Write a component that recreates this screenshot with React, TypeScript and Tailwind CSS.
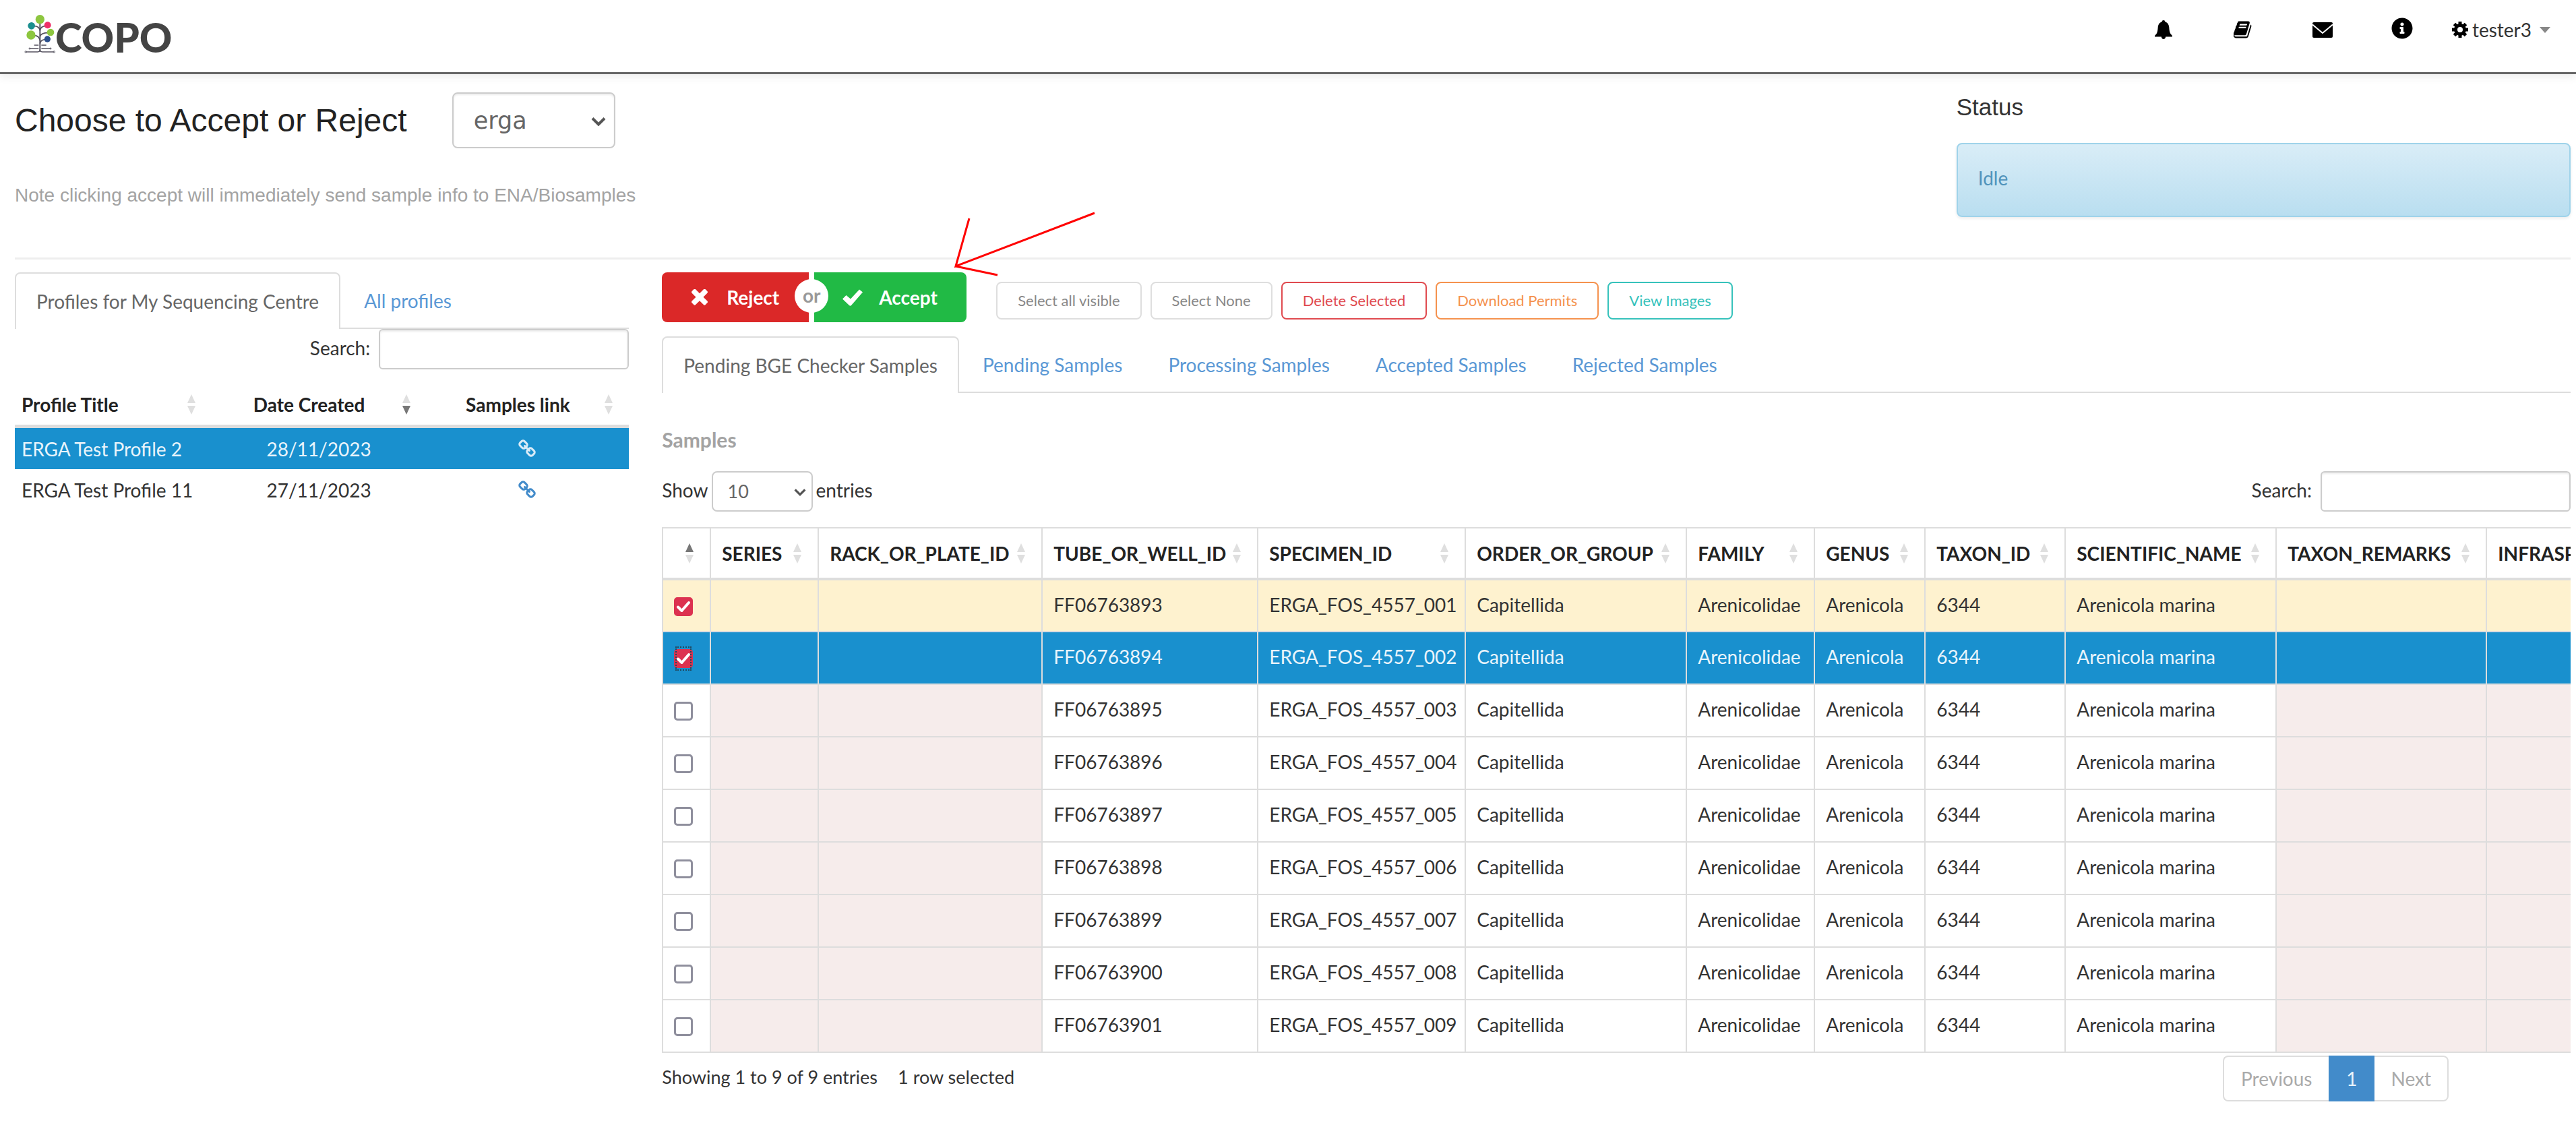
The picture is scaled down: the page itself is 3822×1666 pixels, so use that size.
import React from 'react';
import { FaInfoCircle } from 'react-icons/fa';

type Sort = 'none' | 'asc' | 'desc';

const LINK_PATH =
  'M1456 1216q0-40-28-68l-208-208q-28-28-68-28-42 0-72 32 3 3 19 18.5t21.5 21.5 15 19 13 25.5 3.5 27.5q0 40-28 68t-68 28q-15 0-27.5-3.5t-25.5-13-19-15-21.5-21.5-18.5-19q-33 31-33 73 0 40 28 68l206 207q27 27 68 27 40 0 68-26l147-146q28-28 28-67zm-703-705q0-40-28-68l-206-207q-28-28-68-28-39 0-68 27l-147 146q-28 28-28 67 0 40 28 68l208 208q27 27 68 27 42 0 72-31-3-3-19-18.5t-21.5-21.5-15-19-13-25.5-3.5-27.5q0-40 28-68t68-28q15 0 27.5 3.5t25.5 13 19 15 21.5 21.5 18.5 19q33-31 33-73zm895 705q0 120-85 203l-147 146q-83 83-203 83-121 0-204-85l-206-207q-83-83-83-203 0-123 88-209l-88-88q-86 88-208 88-120 0-204-84l-208-208q-84-84-84-204t85-203l147-146q83-83 203-83 121 0 204 85l206 207q83 83 83 203 0 123-88 209l88 88q86-88 208-88 120 0 204 84l208 208q84 84 84 204z';

const BOOK_PATH =
  'M1639 478q40 57 18 129l-275 906q-19 64-76.5 107.5t-122.5 43.5h-923q-77 0-148.5-53.5t-99.5-131.5q-24-67-2-127 0-4 3-27t4-37q1-8-3-21.5t-3-19.5q2-11 8-21t16.5-23.5 16.5-23.5q23-38 45-91.5t30-91.5q3-10 .5-30t-.5-28q3-11 17-28t17-23q21-36 42-92t25-90q1-9-2.5-32t.5-28q4-13 22-30.5t22-22.5q19-26 42.5-84.5t27.5-96.5q1-8-3-25.5t-2-26.5q2-8 9-18t18-23 17-21q8-12 16.5-30.5t15-35 16-36 19.5-32 26.5-23.5 36-11.5 47.5 5.5l-1 3q38-9 51-9h761q74 0 114 56t18 130l-274 906q-36 119-71.5 153.5t-128.5 34.5h-869q-27 0-38 15-11 16-1 43 24 70 144 70h923q29 0 56-15.5t35-41.5l300-987q7-22 5-57 38 15 59 43zm-1064 2q-4 13 2 22.5t20 9.5h608q13 0 25.5-9.5t16.5-22.5l21-64q4-13-2-22.5t-20-9.5h-608q-13 0-25.5 9.5t-16.5 22.5zm-83 256q-4 13 2 22.5t20 9.5h608q13 0 25.5-9.5t16.5-22.5l21-64q4-13-2-22.5t-20-9.5h-608q-13 0-25.5 9.5t-16.5 22.5z';

const TIMES_PATH =
  'M1490 1322q0 40-28 68l-136 136q-28 28-68 28t-68-28l-294-294-294 294q-28 28-68 28t-68-28l-136-136q-28-28-28-68t28-68l294-294-294-294q-28-28-28-68t28-68l136-136q28-28 68-28t68 28l294 294 294-294q28-28 68-28t68 28l136 136q28 28 28 68t-28 68l-294 294 294 294q28 28 28 68z';

function LogoTree() {
  return (
    <svg viewBox="48 30 138 180" className="h-[60px] w-[46px]" aria-hidden="true">
      <g fill="none" stroke="#55525f" strokeWidth="6">
        <path d="M118 74V200" />
        <path d="M92 86q22 0 26 20M144 86q-22 0-26 20M92 128q22 0 26 22M155 116q-32 0-37 16M140 146q-20 2-22 18" strokeWidth="5" />
        <path d="M92 171H112M124 171H146M74 186H112M124 186H164M60 201H108Q118 201 118 190Q118 201 128 201H178" strokeWidth="4" />
        <circle cx="55" cy="201" r="4" strokeWidth="3" />
        <circle cx="181" cy="201" r="4" strokeWidth="3" />
        <circle cx="72" cy="186" r="3" strokeWidth="3" />
        <circle cx="165" cy="186" r="3" strokeWidth="3" />
      </g>
      <circle cx="118" cy="56" r="20" fill="#8dc63f" />
      <circle cx="80" cy="85" r="16" fill="#1b8f8f" />
      <circle cx="152" cy="82" r="15" fill="#ef2f68" />
      <circle cx="165" cy="114" r="16" fill="#8dc63f" />
      <circle cx="78" cy="126" r="20" fill="#8dc63f" />
      <circle cx="151" cy="144" r="14" fill="#2c4f8c" />
    </svg>
  );
}

function BellIcon() {
  return (
    <svg viewBox="0 0 26 28" className="h-7 w-[26px]" aria-hidden="true">
      <path
        fill="#000"
        d="M13 0c1.4 0 2.2.9 2.3 2.2C19 3.2 21 6.400 21.300 10.500c.3 4 .7 7.500 2.200 9.800L26 23v1.600H16.200C16 26.700 14.800 28 13 28s-3-1.300-3.200-3.400H0V23l2.500-2.700c1.500-2.300 1.900-5.800 2.200-9.800C5 6.400 7 3.200 10.700 2.200 10.800.9 11.600 0 13 0z"
      />
    </svg>
  );
}

function MailIcon() {
  return (
    <svg viewBox="0 0 30 23" className="h-[23px] w-[30px]" aria-hidden="true">
      <rect width="30" height="23" rx="2" fill="#000" />
      <path d="M0 3.500L15 16L30 3.500" fill="none" stroke="#fff" strokeWidth="2" />
    </svg>
  );
}

function CogIcon() {
  return (
    <svg viewBox="0 0 24 24" className="size-6" aria-hidden="true">
      <circle cx="12" cy="12" r="6.500" fill="none" stroke="#000" strokeWidth="5" />
      <g stroke="#000" strokeWidth="5">
        <path d="M12 0v4M12 20v4M0 12h4M20 12h4M3.500 3.500l3 3M17.500 17.500l3 3M20.500 3.500l-3 3M6.500 17.500l-3 3" />
      </g>
    </svg>
  );
}

function LinkIcon() {
  return (
    <svg viewBox="0 0 1792 1792" className="size-7 fill-current" aria-hidden="true">
      <path d={LINK_PATH} />
    </svg>
  );
}

function SortIcon({ sort }: { sort: Sort }) {
  return (
    <svg viewBox="0 0 12 30" className="h-[30px] w-3 shrink-0" aria-hidden="true">
      <path d="M6 0L12 13H0z" fill={sort === 'asc' ? '#777777' : '#dfdfdf'} />
      <path d="M6 30L12 17H0z" fill={sort === 'desc' ? '#777777' : '#dfdfdf'} />
    </svg>
  );
}

function Chevron({ className }: { className: string }) {
  return (
    <svg viewBox="0 0 22 14" className={className} aria-hidden="true">
      <path d="M2 2.500L11 11.500L20 2.500" fill="none" stroke="#555" strokeWidth="4" />
    </svg>
  );
}

function Tabs({ tabs, label }: { tabs: string[]; label: string }) {
  return (
    <nav aria-label={label} className="flex border-b-2 border-[#dddddd]">
      {tabs.map((tab, i) => (
        <a
          key={tab}
          href="#"
          className={
            i === 0
              ? '-mb-0.5 h-[84px] rounded-t-lg border-2 border-b-0 border-[#dddddd] bg-white px-[30px] leading-[82px] whitespace-nowrap text-[#666666]'
              : 'ml-0.5 px-[33px] leading-[84px] h-[82px] whitespace-nowrap text-[#5a98d5]'
          }
        >
          {tab}
        </a>
      ))}
    </nav>
  );
}

function SearchBox({ id }: { id: string }) {
  return (
    <div className="flex items-center justify-end gap-[13px]">
      <label htmlFor={id} className="pb-1">Search:</label>
      <input
        id={id}
        type="search"
        className="h-[60px] w-[371px] rounded-md border-2 border-[#cccccc] bg-white px-4 shadow-[inset_0_2px_3px_rgba(0,0,0,0.08)]"
      />
    </div>
  );
}

const profiles = [
  { title: 'ERGA Test Profile 2', date: '28/11/2023', active: true },
  { title: 'ERGA Test Profile 11', date: '27/11/2023', active: false },
];

function ProfilesTable() {
  const headers: { name: string; sort: Sort; width: string; align: string }[] = [
    { name: 'Profile Title', sort: 'none', width: 'w-[32%]', align: 'text-left' },
    { name: 'Date Created', sort: 'desc', width: 'w-[35%]', align: 'text-center' },
    { name: 'Samples link', sort: 'none', width: 'w-[33%]', align: 'text-center' },
  ];
  return (
    <table className="mt-[21px] w-full table-fixed border-separate border-spacing-0">
      <thead>
        <tr>
          {headers.map((h) => (
            <th
              key={h.name}
              className={`${h.width} h-[66px] border-b-[5px] border-[#dddddd] p-0 text-[#222222]`}
            >
              <div className="flex items-center gap-[3px] pr-6 pl-[10px]">
                <span className={`${h.align} flex-1 whitespace-nowrap`}>{h.name}</span>
                <SortIcon sort={h.sort} />
              </div>
            </th>
          ))}
        </tr>
      </thead>
      <tbody>
        {profiles.map((p) => (
          <tr key={p.title} className={p.active ? 'bg-[#1990ce] text-[#e9f4fb]' : 'text-[#333333]'}>
            <td className="h-[61px] pl-[10px] whitespace-nowrap">{p.title}</td>
            <td className="text-center">{p.date}</td>
            <td className="p-0">
              <a
                href="#"
                aria-label={`Samples of ${p.title}`}
                className={p.active ? 'flex justify-center text-[#d9ebf7]' : 'flex justify-center text-[#428bca]'}
              >
                <LinkIcon />
              </a>
            </td>
          </tr>
        ))}
      </tbody>
    </table>
  );
}

const columns: { name: string; width: string; sort: Sort }[] = [
  { name: '', width: 'w-[71px]', sort: 'asc' },
  { name: 'SERIES', width: 'w-[160px]', sort: 'none' },
  { name: 'RACK_OR_PLATE_ID', width: 'w-[332px]', sort: 'none' },
  { name: 'TUBE_OR_WELL_ID', width: 'w-[320px]', sort: 'none' },
  { name: 'SPECIMEN_ID', width: 'w-[308px]', sort: 'none' },
  { name: 'ORDER_OR_GROUP', width: 'w-[328px]', sort: 'none' },
  { name: 'FAMILY', width: 'w-[190px]', sort: 'none' },
  { name: 'GENUS', width: 'w-[164px]', sort: 'none' },
  { name: 'TAXON_ID', width: 'w-[208px]', sort: 'none' },
  { name: 'SCIENTIFIC_NAME', width: 'w-[313px]', sort: 'none' },
  { name: 'TAXON_REMARKS', width: 'w-[312px]', sort: 'none' },
  { name: 'INFRASPECIFIC_EPITHET', width: 'w-[420px]', sort: 'none' },
];

const samples = Array.from({ length: 9 }, (_, i) => [
  '',
  '',
  `FF0676${3893 + i}`,
  `ERGA_FOS_4557_00${i + 1}`,
  'Capitellida',
  'Arenicolidae',
  'Arenicola',
  '6344',
  'Arenicola marina',
  '',
  '',
]);

function RowCheckbox({ label, checked, focused }: { label: string; checked: boolean; focused: boolean }) {
  return (
    <div className="relative mt-0.5 ml-4 size-7">
      <input
        type="checkbox"
        aria-label={label}
        defaultChecked={checked}
        className="peer block size-7 appearance-none rounded-[5px] border-[3px] border-[#8f8f9d] bg-white checked:border-[#dc3250] checked:bg-[#dc3250]"
      />
      <svg viewBox="0 0 28 28" className="pointer-events-none absolute inset-0 hidden size-7 peer-checked:block" aria-hidden="true">
        <path d="M6 14.500L11.500 20L22 8" fill="none" stroke="#fff" strokeWidth="4" strokeLinecap="round" strokeLinejoin="round" />
      </svg>
      {focused && <span className="pointer-events-none absolute inset-x-0.5 -inset-y-1 border-2 border-dotted border-[#20485f]" />}
    </div>
  );
}

function SamplesTable() {
  return (
    <div className="mt-[23px] overflow-hidden">
      <table className="w-[3126px] table-fixed border-collapse border-2 border-[#dddddd]">
        <thead>
          <tr>
            {columns.map((c) => (
              <th
                key={c.name}
                className={`${c.width} h-[76px] border-2 border-b-4 border-[#dddddd] p-0 text-left text-[#222222]`}
              >
                <div className="flex items-center justify-between pr-6 pl-4">
                  <span className="whitespace-nowrap">{c.name}</span>
                  <SortIcon sort={c.sort} />
                </div>
              </th>
            ))}
          </tr>
        </thead>
        <tbody>
          {samples.map((row, r) => (
            <tr
              key={row[2]}
              className={
                r === 0
                  ? 'bg-[#fef2cf] text-[#333333]'
                  : r === 1
                    ? 'bg-[#1990ce] text-[#e9f4fb]'
                    : 'text-[#333333]'
              }
            >
              <td className="h-[78px] border-2 border-[#dddddd] p-0">
                <RowCheckbox label={`Select ${row[2]}`} checked={r < 2} focused={r === 1} />
              </td>
              {row.map((value, c) => (
                <td
                  key={c}
                  className={
                    r > 1 && value === ''
                      ? 'border-2 border-[#dddddd] bg-[#f6eceb] p-0'
                      : 'border-2 border-[#dddddd] p-0 pb-1 pl-4 whitespace-nowrap'
                  }
                >
                  {value}
                </td>
              ))}
            </tr>
          ))}
        </tbody>
      </table>
    </div>
  );
}

function PointerArrow() {
  return (
    <svg
      viewBox="0 0 214 104"
      className="pointer-events-none absolute -top-[94px] left-[434px] h-[104px] w-[214px]"
      aria-hidden="true"
    >
      <path d="M22 14L2 85L208 6M2 85L64 98" fill="none" stroke="#ff0000" strokeWidth="3" />
    </svg>
  );
}

const actions = [
  { name: 'Select all visible', style: 'border-[#dedede] text-[#888888]' },
  { name: 'Select None', style: 'border-[#dedede] text-[#888888]' },
  { name: 'Delete Selected', style: 'border-[#e04a4f] text-[#e04a4f]' },
  { name: 'Download Permits', style: 'border-[#f5924e] text-[#f5924e]' },
  { name: 'View Images', style: 'border-[#36c2bb] text-[#36c2bb]' },
];

function ActionBar() {
  return (
    <div className="relative flex h-[74px]">
      <div className="relative flex gap-2 font-bold text-white">
        <button type="button" className="flex w-[218px] items-center gap-7 rounded-l-lg bg-[#db2828] pl-11">
          <svg viewBox="302 382 1188 1188" className="size-6 fill-white" aria-hidden="true">
            <path d={TIMES_PATH} />
          </svg>
          Reject
        </button>
        <button type="button" className="flex w-[226px] items-center gap-6 rounded-r-lg bg-[#21ba45] pl-[42px]">
          <svg viewBox="0 0 30 25" className="h-[25px] w-[30px] fill-white" aria-hidden="true">
            <path d="M0 14.500L5.500 9L12 14.500L25 0.500L30 4.500L13 24Q11.500 25.500 10 24z" />
          </svg>
          Accept
        </button>
        <span className="absolute top-[10px] left-[197px] size-[50px] rounded-full bg-white text-center leading-[48px] text-[#999999]">
          or
        </span>
      </div>
      <div className="mb-1 ml-11 flex gap-[13px] self-end">
        {actions.map((a) => (
          <button
            key={a.name}
            type="button"
            className={`${a.style} h-14 rounded-lg border-2 bg-white px-[30px] text-[22px] whitespace-nowrap`}
          >
            {a.name}
          </button>
        ))}
      </div>
      <PointerArrow />
    </div>
  );
}

function Header() {
  return (
    <header className="flex h-[110px] items-start justify-between border-b-[3px] border-[#666666] pr-[38px] pl-9 shadow-[0_4px_12px_rgba(0,0,0,0.08)]">
      <a href="#" className="flex items-end pt-5">
        <LogoTree />
        <span className="text-[60px] leading-[50px] font-black text-[#444444]">COPO</span>
      </a>
      <nav aria-label="Account" className="flex items-center pt-6">
        <div className="flex h-10 items-center gap-[88px]">
          <a href="#" aria-label="Notifications" className="flex w-[30px] justify-center">
            <BellIcon />
          </a>
          <a href="#" aria-label="Documentation" className="flex w-[30px] justify-center">
            <svg viewBox="100 100 1600 1600" className="h-[26px] w-7" aria-hidden="true">
              <path d={BOOK_PATH} />
            </svg>
          </a>
          <a href="#" aria-label="Messages" className="flex w-[30px] justify-center">
            <MailIcon />
          </a>
          <a href="#" aria-label="Information" className="flex w-[30px] justify-center pb-1 text-black">
            <FaInfoCircle className="size-8 shrink-0" />
          </a>
        </div>
        <button type="button" className="ml-[59px] flex items-center gap-1.5 text-[#333333]">
          <CogIcon />
          tester3
          <svg viewBox="0 0 16 9" className="ml-1.5 h-[9px] w-4" aria-hidden="true">
            <path d="M0 0H16L8 9z" fill="#888" />
          </svg>
        </button>
      </nav>
    </header>
  );
}

export default function App() {
  return (
    <div className="min-h-screen overflow-hidden bg-white font-['Lato',sans-serif] text-[28px] leading-10 text-[#333333]">
      <Header />
      <main className="pr-2 pl-[22px]">
        <section className="grid h-[275px] grid-cols-4 gap-x-[49px] border-b-[3px] border-[#eeeeee] font-['Liberation_Sans',sans-serif]">
          <div className="col-span-3 pt-[27px]">
            <div className="flex items-center gap-[67px]">
              <h1 className="text-5xl text-[#222222]">
                <label htmlFor="group">Choose to Accept or Reject</label>
              </h1>
              <div className="relative">
                <select
                  id="group"
                  className="block h-[83px] w-[242px] appearance-none rounded-lg border-2 border-[#cccccc] bg-white pl-[30px] font-['DejaVu_Sans',sans-serif] text-[35px] text-[#666666] shadow-[inset_0_2px_3px_rgba(0,0,0,0.08)]"
                >
                  <option>erga</option>
                </select>
                <Chevron className="pointer-events-none absolute top-9 right-[14px] h-[14px] w-[22px]" />
              </div>
            </div>
            <p className="mt-[50px] text-[#a3a3a3]">Note clicking accept will immediately send sample info to ENA/Biosamples</p>
          </div>
          <div className="pt-6">
            <h2 className="text-[35px] leading-[50px]">Status</h2>
            <div className="mt-7 h-[110px] rounded-lg border-2 border-[#9fd3ea] bg-linear-to-b from-[#d9edf7] to-[#b9def0] pt-[30px] pl-[30px] font-['Lato',sans-serif] text-[#5093bb] shadow-[0_2px_4px_rgba(0,0,0,0.08)]">
              Idle
            </div>
          </div>
        </section>
        <section className="mt-[19px] grid grid-cols-4 gap-x-[49px]">
          <div>
            <Tabs label="Profiles" tabs={['Profiles for My Sequencing Centre', 'All profiles']} />
            <SearchBox id="profile-search" />
            <ProfilesTable />
          </div>
          <div className="col-span-3">
            <ActionBar />
            <div className="mt-[21px]">
              <Tabs
                label="Samples"
                tabs={[
                  'Pending BGE Checker Samples',
                  'Pending Samples',
                  'Processing Samples',
                  'Accepted Samples',
                  'Rejected Samples',
                ]}
              />
            </div>
            <h3 className="mt-[49px] text-[30px] font-bold text-[#a3a3a3]">Samples</h3>
            <div className="mt-[27px] flex items-center justify-between">
              <div className="flex items-center gap-[5px]">
                <label htmlFor="page-size" className="pb-1">Show</label>
                <div className="relative">
                  <select
                    id="page-size"
                    className="block h-[60px] w-[150px] appearance-none rounded-lg border-2 border-[#cccccc] bg-white pl-[22px] text-[27px] text-[#666666]"
                  >
                    <option>10</option>
                  </select>
                  <Chevron className="pointer-events-none absolute top-[25px] right-[10px] h-3 w-[18px]" />
                </div>
                <span className="pb-1">entries</span>
              </div>
              <SearchBox id="sample-search" />
            </div>
            <SamplesTable />
            <div className="mt-1 flex items-center justify-between pr-[181px]">
              <p className="flex gap-[30px] pb-1 text-[27px]">
                <span>Showing 1 to 9 of 9 entries</span>
                <span>1 row selected</span>
              </p>
              <nav aria-label="Pages" className="flex h-[68px] text-[#aaaaaa]">
                <button type="button" className="rounded-l-lg border-2 border-r-0 border-[#dddddd] px-[25px]">
                  Previous
                </button>
                <button type="button" aria-current="page" className="w-[68px] bg-[#428bca] text-[#e9f4fb]">
                  1
                </button>
                <button type="button" className="rounded-r-lg border-2 border-l-0 border-[#dddddd] px-6">
                  Next
                </button>
              </nav>
            </div>
          </div>
        </section>
      </main>
    </div>
  );
}
